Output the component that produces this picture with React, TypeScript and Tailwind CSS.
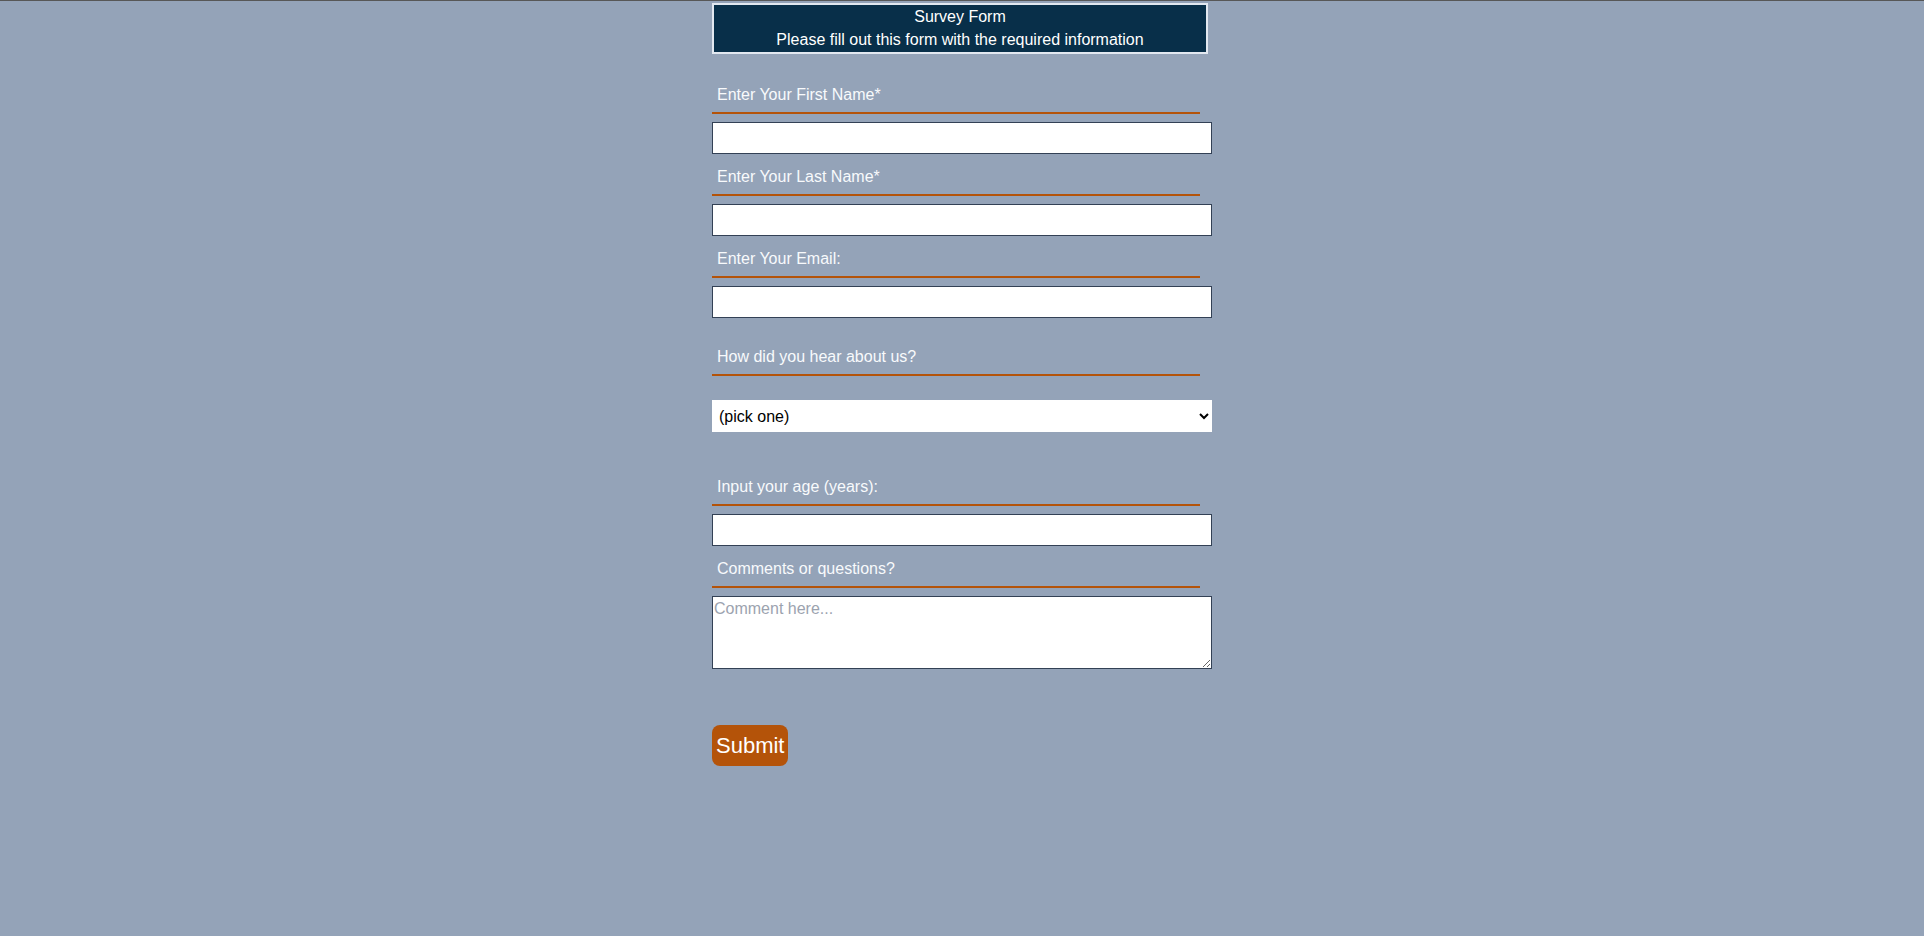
import React from "react";

function Label({ text, className = "" }: { text: string; className?: string }) {
  return (
    <label
      className={`block w-[488px] border-b-2 border-[#b45309] pb-2 pl-[5px] text-base leading-[18px] text-[#f8fafc] ${className}`}
    >
      {text}
    </label>
  );
}

export default function App() {
  return (
    <div
      className="min-h-screen border-t border-[#575757] bg-[#94a3b8]"
      style={{ fontFamily: '"Liberation Sans", Arial, sans-serif' }}
    >
      <div className="mx-auto w-[500px]">
        <header className="mt-[2px] h-[51px] w-[496px] border-2 border-[#e2e8f0] bg-[#082f49] text-center text-base leading-[23px] text-white">
          <div>Survey Form</div>
          <div>Please fill out this form with the required information</div>
        </header>
        <form onSubmit={(e) => e.preventDefault()}>
          <Label text="Enter Your First Name*" className="mt-[32px]" />
          <input type="text" className="mt-2 block h-8 w-[500px] border border-[#334155] bg-white px-[2px] text-black" />

          <Label text="Enter Your Last Name*" className="mt-[14px]" />
          <input type="text" className="mt-2 block h-8 w-[500px] border border-[#334155] bg-white px-[2px] text-black" />

          <Label text="Enter Your Email:" className="mt-[14px]" />
          <input type="email" className="mt-2 block h-8 w-[500px] border border-[#334155] bg-white px-[2px] text-black" />

          <Label text="How did you hear about us?" className="mt-[30px]" />
          <select className="mt-6 block h-8 w-[500px] border-0 bg-white pl-[3px] pr-1 text-base text-black outline-none">
            <option>(pick one)</option>
            <option>Friend</option>
            <option>Internet</option>
            <option>Other</option>
          </select>

          <Label text="Input your age (years):" className="mt-[46px]" />
          <input type="number" className="mt-2 block h-8 w-[500px] border border-[#334155] bg-white px-[2px] text-black" />

          <Label text="Comments or questions?" className="mt-[14px]" />
          <textarea
            placeholder="Comment here..."
            className="mt-2 block h-[73px] w-[500px] border border-[#334155] bg-white px-[1px] pt-[3px] text-base leading-[18px] text-black placeholder:text-[#9ca3af]"
          />

          <button
            type="submit"
            className="mt-14 block h-[41px] rounded-lg bg-[#b45309] px-1 pt-[1px] text-[22px] leading-none text-white"
          >
            Submit
          </button>
        </form>
      </div>
    </div>
  );
}
